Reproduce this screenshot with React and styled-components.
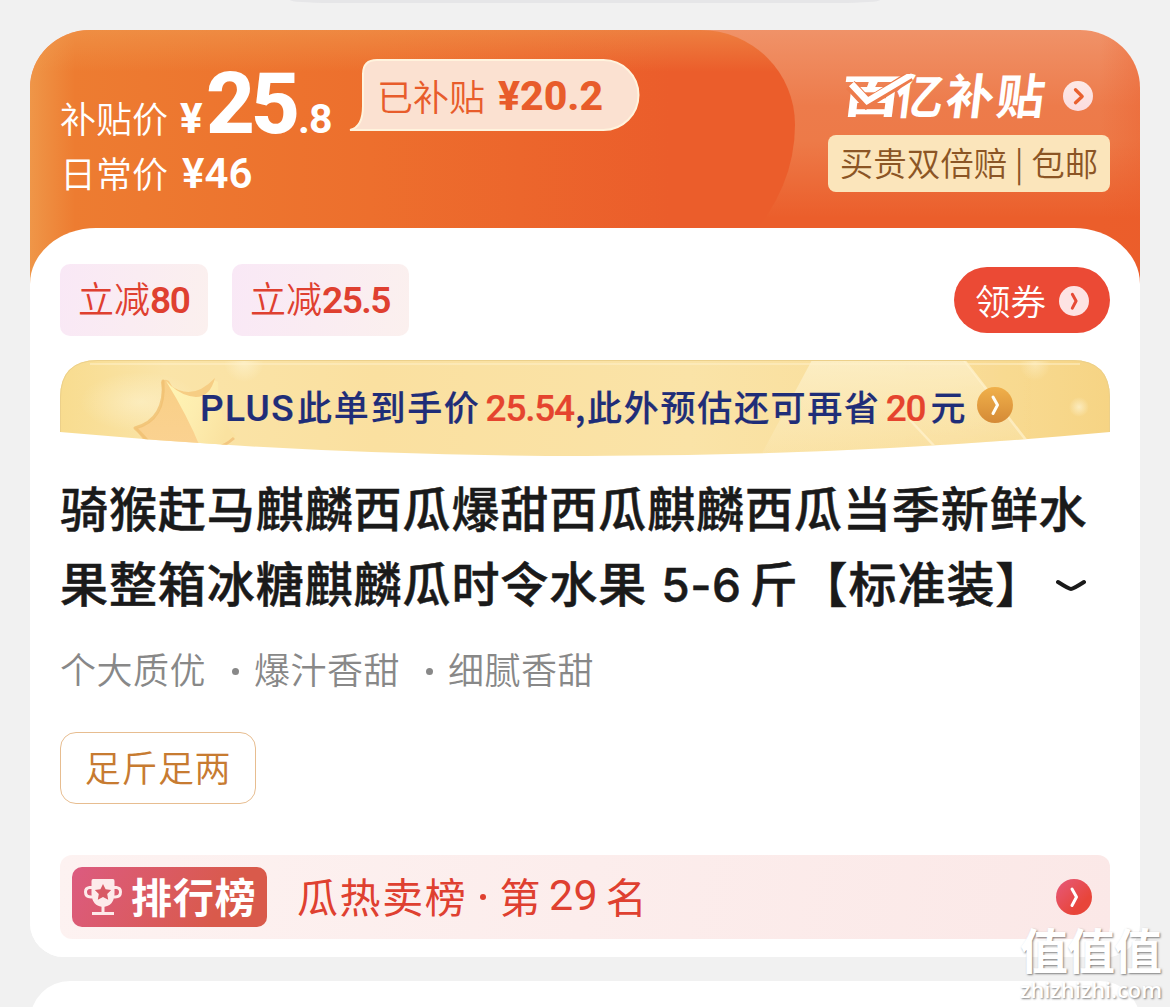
import React from "react";
import styled, { createGlobalStyle } from "styled-components";

function Arrow({ size, bg, color, stroke = 2.6, wide }) {
  return (
    <Circle $size={size} $bg={bg}>
      <svg width={size} height={size} viewBox="0 0 36 36" fill="none">
        <path
          d={wide ? "M15 10.5 L23 18.5 L15 26" : "M16 10 L20.5 18 L16 26.5"}
          stroke={color}
          strokeWidth={stroke}
          strokeLinecap="round"
          strokeLinejoin="round"
        />
      </svg>
    </Circle>
  );
}

function Trophy() {
  return (
    <svg width="40" height="38" viewBox="0 0 40 38">
      <path
        d="M9 9.500 H6.500 Q2.500 10 2.500 14 Q2.500 19 8 19 H9 M31 9.500 H33.500 Q37.500 10 37.500 14 Q37.500 19 32 19 H31"
        fill="none"
        stroke="#fdeaea"
        strokeWidth="3"
      />
      <path
        d="M10 1 H30 Q31.500 1 31.500 3 V16 Q31 28 20 29 Q9 28 8.500 16 V3 Q8.500 1 10 1 Z"
        fill="#fdeaea"
      />
      <path
        d="M20 6 L22.600 11.200 L28.200 12 L24.200 16 L25.200 21.800 L20 19 L14.800 21.800 L15.800 16 L11.800 12 L17.400 11.200 Z"
        fill="#d85a64"
      />
      <path d="M20 28 V34 M9 35.500 H31" stroke="#fdeaea" strokeWidth="3" />
    </svg>
  );
}

function BubbleShape() {
  return (
    <BubbleSvg width="292" height="74" viewBox="0 0 292 74">
      <path
        d="M1 72 Q14 69 14 48 V16 Q14 2 28 2 H254.500 A35 35 0 0 1 254.500 72 Z"
        fill="#fbe1d1"
        stroke="#fff3dd"
        strokeWidth="2"
      />
    </BubbleSvg>
  );
}

function PlusShape() {
  return (
    <PlusSvg width="1050" height="97" viewBox="0 0 1050 97">
      <defs>
        <linearGradient id="gold" x1="0" y1="0" x2="1" y2="0">
          <stop offset="0" stopColor="#f8dc8f" />
          <stop offset="0.1" stopColor="#fae4a8" />
          <stop offset="0.3" stopColor="#fae0a0" />
          <stop offset="0.6" stopColor="#fae3a7" />
          <stop offset="0.85" stopColor="#f9dd98" />
          <stop offset="1" stopColor="#f6d484" />
        </linearGradient>
        <linearGradient id="beam" x1="0" y1="0" x2="0" y2="1">
          <stop offset="0" stopColor="#fdf2cf" stopOpacity="0.75" />
          <stop offset="1" stopColor="#fdf2cf" stopOpacity="0.1" />
        </linearGradient>
        <linearGradient id="starLeft" x1="0.5" y1="0" x2="0.5" y2="1">
          <stop offset="0" stopColor="#f8cf86" />
          <stop offset="1" stopColor="#fbd292" />
        </linearGradient>
        <linearGradient id="starRight" x1="0" y1="0" x2="1" y2="0.4">
          <stop offset="0" stopColor="#fff5b4" />
          <stop offset="0.5" stopColor="#fdedaf" />
          <stop offset="1" stopColor="#fae2a0" />
        </linearGradient>
        <radialGradient id="glow">
          <stop offset="0" stopColor="#fff8dc" stopOpacity="0.9" />
          <stop offset="1" stopColor="#fff8dc" stopOpacity="0" />
        </radialGradient>
        <clipPath id="plate">
          <path d="M0 72 V38 Q0 0 38 0 H1012 Q1050 0 1050 38 V72 Q790 96 525 96 Q260 96 0 72 Z" />
        </clipPath>
      </defs>
      <g clipPath="url(#plate)">
        <rect width="1050" height="97" fill="url(#gold)" />
        <path d="M752 0 H904 L978 97 H700 Z" fill="url(#beam)" />
        <path d="M904 0 L966 80 M850 60 L878 90" stroke="#fff3cf" strokeWidth="2.5" opacity="0.7" />
        <circle cx="1019" cy="47" r="10" fill="url(#glow)" opacity="0.7" />
        <ellipse cx="184" cy="2" rx="20" ry="20" fill="url(#glow)" opacity="0.6" />
        <ellipse cx="975" cy="3" rx="16" ry="18" fill="url(#glow)" opacity="0.5" />
        <ellipse cx="80" cy="42" rx="60" ry="30" fill="url(#glow)" opacity="0.5" />
        <path d="M75 68 Q108 60 101 22 Q104 18 109 21 L142 80 L140 92 H92 Q82 79 75 68 Z" fill="url(#starLeft)" />
        <path
          d="M75 68 Q106 60 103 21 M75 68 Q82 74 90 84"
          stroke="#f0bf70"
          strokeWidth="3"
          strokeLinecap="round"
          fill="none"
          opacity="0.8"
        />
        <path d="M106 21 Q128 46 154 20 L158 22 Q158 60 176 76 Q166 92 142 92 Q130 60 106 21 Z" fill="url(#starRight)" />
        <path d="M110 25 Q132 42 155 18 Q150 37 136 37 Q122 36 110 25 Z" fill="#f6cd84" />
        <path d="M174 78 Q164 87 152 89" stroke="#f3c680" strokeWidth="3" fill="none" />
        <path d="M30 4 H1020" stroke="#fff1cc" strokeWidth="2" opacity="0.5" />
      </g>
      <path
        d="M0.500 72 V38 Q0.500 0.500 38 0.500 H1012 Q1049.500 0.500 1049.500 38 V72"
        fill="none"
        stroke="#ecd08a"
      />
    </PlusSvg>
  );
}

function App() {
  return (
    <Page>
      <GlobalStyle />
      <TopSliver />
      <Card>
        <Header>
          <HeaderTab />
          <Prices>
            <PriceRow $height={84}>
              <Label>补贴价</Label>
              <Yen>¥</Yen>
              <Big>25</Big>
              <Small>.8</Small>
            </PriceRow>
            <PriceRow $height={44}>
              <Label>日常价</Label>
              <Daily>¥46</Daily>
            </PriceRow>
          </Prices>
          <Bubble>
            <BubbleShape />
            <BubbleLabel>已补贴</BubbleLabel>
            <BubblePrice>¥20.2</BubblePrice>
          </Bubble>
          <Subsidy>
            <LogoRow>
              <Logo>
                <WideChar>百</WideChar>亿补贴
                <Check width="72" height="44" viewBox="0 0 72 44">
                  <path d="M5 11 L24 29 L64 2" fill="none" stroke="#ed7b4b" strokeWidth="11" />
                  <path d="M6 10 L24 27 L66 0" fill="none" stroke="#fff" strokeWidth="6.5" />
                </Check>
              </Logo>
              <Arrow size={30} bg="linear-gradient(#fde9e6, #fbdcdf)" color="#e9602f" stroke={4} wide />
            </LogoRow>
            <Promise>买贵双倍赔 | 包邮</Promise>
          </Subsidy>
        </Header>
        <Body>
          <Coupons>
            <Coupon $width={148}>
              立减<b>80</b>
            </Coupon>
            <Coupon $width={177}>
              立减<b>25.5</b>
            </Coupon>
            <GetButton>
              领券
              <Arrow size={30} bg="#fde3e3" color="#e64a35" stroke={3.6} />
            </GetButton>
          </Coupons>
          <Plus>
            <PlusShape />
            <PlusText>
              <Latin>PLUS</Latin>此单到手价<Hot>25.54</Hot>
              <Comma>,</Comma>此外预估还可再省<Hot>20</Hot>元
            </PlusText>
            <Arrow size={36} bg="linear-gradient(#f0b04a, #d58a36)" color="#fffdf5" stroke={3} />
          </Plus>
          <Title>
            <div>骑猴赶马麒麟西瓜爆甜西瓜麒麟西瓜当季新鲜水</div>
            <div>
              果整箱冰糖麒麟瓜时令水果<Count>5-6</Count>斤<Lenticular>【</Lenticular>标准装】
              <svg width="30" height="14" viewBox="0 0 30 14" fill="none">
                <path
                  d="M2 3 Q13 10 15 10 Q17 10 28 3"
                  stroke="#1a1a1a"
                  strokeWidth="4"
                  strokeLinecap="round"
                />
              </svg>
            </div>
          </Title>
          <Features>
            <span>个大质优</span>
            <Dot />
            <span>爆汁香甜</span>
            <Dot />
            <span>细腻香甜</span>
          </Features>
          <Tag>足斤足两</Tag>
          <Rank>
            <RankBadge>
              <Trophy />
              排行榜
            </RankBadge>
            <RankText>
              瓜热卖榜<RankDot />第<RankNumber>29</RankNumber>名
            </RankText>
            <Arrow size={36} bg="linear-gradient(135deg, #e65a7c, #e8453a 70%)" color="#fff" stroke={3} />
          </Rank>
        </Body>
      </Card>
      <NextCard />
      <Watermark>
        <strong>值值值</strong>
        <span>zhizhizhi.com</span>
      </Watermark>
    </Page>
  );
}

const GlobalStyle = createGlobalStyle`
  body {
    margin: 0;
  }
  * {
    box-sizing: border-box;
  }
`;

const Page = styled.div`
  position: relative;
  width: 1170px;
  height: 1007px;
  overflow: hidden;
  background: #f1f1f1;
  font-family: "Noto Sans CJK SC", sans-serif;
  white-space: nowrap;
`;

const TopSliver = styled.div`
  width: 590px;
  height: 3px;
  margin: 0 auto 27px;
  background: #e6e6e8;
  border-radius: 0 0 40px 40px / 0 0 3px 3px;
`;

const Card = styled.div`
  width: 1110px;
  height: 927px;
  margin: 0 auto;
  background: #fff;
  border-radius: 60px 60px 34px 34px / 58px 58px 34px 34px;
  overflow: hidden;
`;

const Header = styled.div`
  position: relative;
  display: flex;
  height: 254px;
  background: linear-gradient(to left, rgba(235, 92, 42, 0.35), transparent 40px),
    linear-gradient(#f09268, #ed7b4b 30%, #ed7a48 44%, #eb5e2b 74%);
`;

const HeaderTab = styled.div`
  position: absolute;
  left: 0;
  top: 0;
  width: 765px;
  height: 254px;
  background: linear-gradient(rgba(240, 160, 85, 0.5), transparent 42px),
    linear-gradient(to right, #ef9648, #ed7c31 45px, #ed6f2d 340px, #eb5d2b 640px);
  border-radius: 0 95px 160px 0 / 0 95px 160px 0;
`;

const Prices = styled.div`
  position: relative;
  width: 319px;
  padding: 32px 0 0 30px;
  color: #fff;
`;

const PriceRow = styled.div`
  display: flex;
  align-items: baseline;
  height: ${(props) => props.$height}px;
  line-height: ${(props) => props.$height}px;

  & + & {
    margin-top: 6px;
  }
`;

const Label = styled.span`
  width: 120px;
  font-size: 36px;
  font-weight: 350;
  line-height: 40px;
`;

const Yen = styled.span`
  width: 26px;
  font: 800 42px Roboto, sans-serif;
  line-height: 40px;
`;

const Big = styled.span`
  width: 92px;
  font: 800 85px Roboto, sans-serif;
  line-height: 84px;
  letter-spacing: -4px;
`;

const Small = styled.span`
  font: 700 41px Roboto, sans-serif;
  line-height: 40px;
  letter-spacing: -1px;
`;

const Daily = styled.span`
  padding-left: 2px;
  font: 600 42px Roboto, sans-serif;
  line-height: 40px;
`;

const Bubble = styled.div`
  position: relative;
  display: flex;
  align-items: center;
  width: 292px;
  height: 74px;
  margin-top: 28px;
  padding-left: 28px;
  color: #e85c2b;
`;

const BubbleSvg = styled.svg`
  position: absolute;
  left: 0;
  top: 0;
`;

const BubbleLabel = styled.span`
  position: relative;
  width: 121px;
  font-size: 36px;
  line-height: 74px;
  font-weight: 350;
`;

const BubblePrice = styled.span`
  position: relative;
  font: 800 41px Roboto, sans-serif;
  line-height: 74px;
  padding-top: 2px;
`;

const Subsidy = styled.div`
  position: relative;
  display: flex;
  flex-direction: column;
  align-items: flex-end;
  margin-left: auto;
  padding: 37px 30px 0 0;
`;

const LogoRow = styled.div`
  display: flex;
  align-items: center;
  height: 57px;
  margin-bottom: 11px;
  padding-right: 17px;
  gap: 13px;
`;

const Logo = styled.div`
  position: relative;
  width: 208px;
  padding-bottom: 6px;
  color: #fff;
  font-size: 48px;
  font-weight: 700;
  line-height: 52px;
  letter-spacing: 2.5px;
  transform: skewX(-7deg);
`;

const WideChar = styled.span`
  display: inline-block;
  width: 54px;
  letter-spacing: 0;
  transform: scale(1.32, 0.95);
  transform-origin: 5px 50%;
`;

const Check = styled.svg`
  position: absolute;
  left: 2px;
  top: 7px;
`;

const Promise = styled.div`
  width: 282px;
  height: 57px;
  background: #fbe5bb;
  border-radius: 8px;
  color: #8b5525;
  font-size: 33.5px;
  font-weight: 350;
  line-height: 53px;
  text-align: center;
`;

const Circle = styled.span`
  display: block;
  flex: none;
  width: ${(props) => props.$size}px;
  height: ${(props) => props.$size}px;
  border-radius: 50%;
  background: ${(props) => props.$bg};

  svg {
    display: block;
  }
`;

const Body = styled.div`
  position: relative;
  height: 729px;
  margin-top: -56px;
  padding: 36px 30px 0;
  background: #fff;
  border-radius: 66px 66px 0 0 / 56px 56px 0 0;
`;

const Coupons = styled.div`
  display: flex;
  align-items: center;
  gap: 24px;
  height: 72px;
`;

const Coupon = styled.div`
  width: ${(props) => props.$width}px;
  height: 72px;
  padding-left: 18px;
  background: linear-gradient(100deg, #f9e8f6, #fbf0ee);
  border-radius: 10px;
  color: #df4030;
  font-size: 36px;
  font-weight: 350;
  line-height: 67px;

  b {
    font: 600 37px Roboto, sans-serif;
    letter-spacing: -1.5px;
  }
`;

const GetButton = styled.div`
  display: flex;
  align-items: center;
  gap: 13px;
  width: 156px;
  height: 66px;
  margin-left: auto;
  padding-left: 21px;
  background: #eb4a35;
  border-radius: 33px;
  color: #fff;
  font-size: 35.5px;
  font-weight: 350;
  line-height: 58px;

  span {
    margin-top: 1px;
  }
`;

const Plus = styled.div`
  position: relative;
  display: flex;
  align-items: center;
  height: 90px;
  margin-top: 24px;
  padding-left: 140px;
`;

const PlusSvg = styled.svg`
  position: absolute;
  left: 0;
  top: 0;
`;

const PlusText = styled.div`
  position: relative;
  width: 777px;
  padding-top: 4px;
  color: #1f2d78;
  font-size: 35px;
  font-weight: 500;
  line-height: 86px;
  letter-spacing: 1.7px;
  -webkit-text-stroke: 0.2px currentColor;

  & + span {
    position: relative;
  }
`;

const Latin = styled.span`
  margin-right: 2px;
  font-family: Roboto, sans-serif;
  font-size: 37px;
  letter-spacing: 1.4px;
`;

const Hot = styled.span`
  margin: 0 5px;
  color: #e5442e;
  font-family: Roboto, sans-serif;
  font-size: 37px;
  letter-spacing: -1.2px;
`;

const Comma = styled.span`
  margin-left: -4px;
`;

const Title = styled.div`
  height: 150px;
  margin-top: 19px;
  color: #1a1a1a;
  font-size: 48px;
  font-weight: 500;
  line-height: 75px;
  letter-spacing: 0.93px;
  -webkit-text-stroke: 0.5px currentColor;

  svg {
    margin-left: 12px;
    vertical-align: 9px;
  }
`;

const Count = styled.span`
  margin: 0 8px 0 14px;
  font-family: Inter, sans-serif;
  font-size: 46px;
  letter-spacing: 0.6px;
`;

const Lenticular = styled.span`
  margin-left: 1px;
`;

const Features = styled.div`
  display: flex;
  align-items: center;
  height: 52px;
  margin-top: 23px;
  color: #888;
  font-size: 36px;
  font-weight: 350;
  letter-spacing: 0.5px;
  line-height: 50px;
`;

const Dot = styled.i`
  width: 7px;
  height: 7px;
  margin: 6px 15px 0 26px;
  background: #888;
  border-radius: 50%;
`;

const Tag = styled.div`
  width: 196px;
  height: 72px;
  margin-top: 38px;
  border: 1.5px solid #e7bd90;
  border-radius: 16px;
  color: #c77b31;
  font-size: 36px;
  font-weight: 350;
  line-height: 66px;
  letter-spacing: 0.6px;
  text-align: center;
`;

const Rank = styled.div`
  display: flex;
  align-items: center;
  height: 84px;
  margin-top: 51px;
  padding: 0 18px 0 12px;
  background: linear-gradient(100deg, #fdf2f1, #fbe8e7);
  border-radius: 12px;
`;

const RankBadge = styled.div`
  display: flex;
  align-items: center;
  gap: 8px;
  width: 195px;
  height: 60px;
  padding: 0 0 5px 11px;
  background: linear-gradient(120deg, #dc5b80, #d95a4b 75%);
  border-radius: 10px;
  color: #fff;
  font-size: 41px;
  font-weight: 700;
  line-height: 52px;
  letter-spacing: 0.9px;

  svg {
    margin-top: 4px;
  }
`;

const RankText = styled.div`
  flex: 1;
  display: flex;
  align-items: center;
  padding: 0 0 4px 30px;
  color: #df4030;
  font-size: 41px;
  line-height: 76px;
  letter-spacing: 1.6px;
`;

const RankDot = styled.i`
  width: 6px;
  height: 6px;
  margin: 4px 13px 0;
  background: #df4030;
  border-radius: 50%;
`;

const RankNumber = styled.span`
  margin: 0 8px 0 7px;
  font-family: Roboto, sans-serif;
  font-size: 43px;
  letter-spacing: 0.2px;
`;

const NextCard = styled.div`
  width: 1110px;
  height: 80px;
  margin: 24px auto 0;
  background: #fff;
  border-radius: 40px 40px 0 0;
`;

const Watermark = styled.div`
  position: absolute;
  right: 7px;
  bottom: 2px;
  display: flex;
  flex-direction: column;
  width: 143px;
  color: #fff;
  text-shadow: 1px 1px 2px rgba(90, 90, 90, 0.75);

  strong {
    font-size: 48px;
    font-weight: 700;
    line-height: 52px;
    letter-spacing: -1px;
  }

  span {
    font: 600 21.8px "Open Sans", sans-serif;
    line-height: 31px;
  }
`;

export default App;
